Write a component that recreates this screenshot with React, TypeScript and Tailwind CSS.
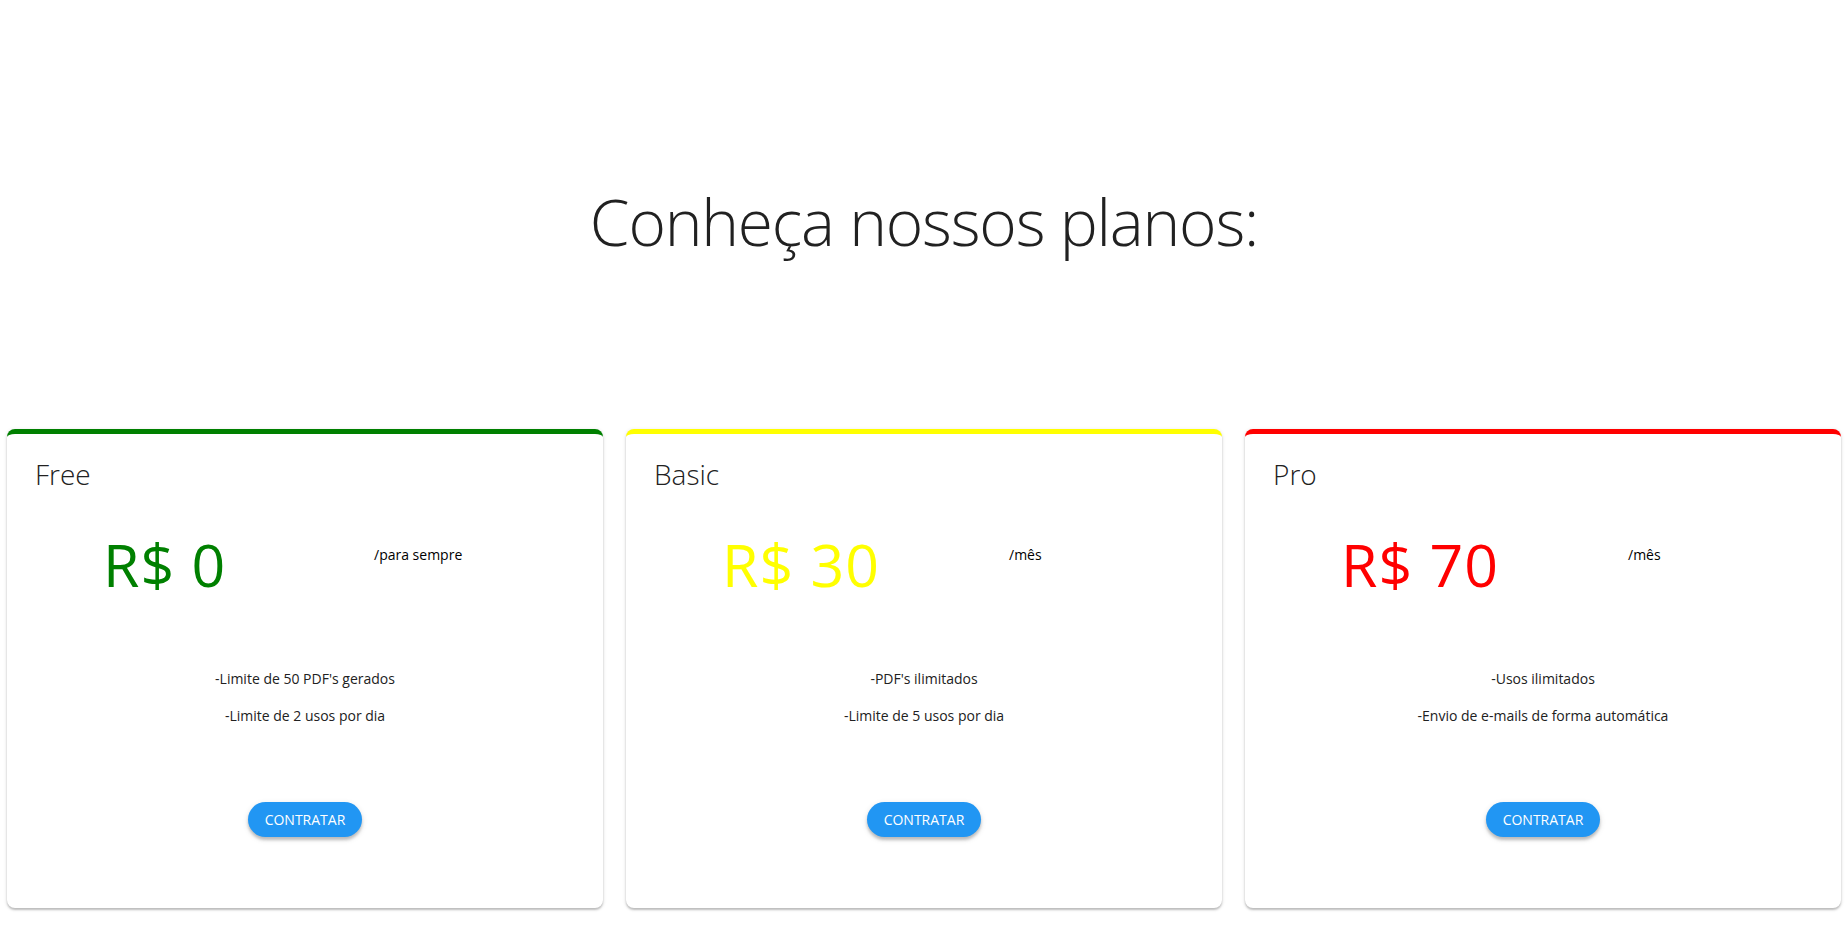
import React from 'react';

interface Plan {
  name: string;
  price: string;
  period: string;
  border: string;
  color: string;
  priceBox: string;
  features: string[];
}

const plans: Plan[] = [
  {
    name: 'Free',
    price: 'R$ 0',
    period: '/para sempre',
    border: 'border-[#008000]',
    color: 'text-[#008000]',
    priceBox: 'w-[271px]',
    features: ["-Limite de 50 PDF's gerados", '-Limite de 2 usos por dia'],
  },
  {
    name: 'Basic',
    price: 'R$ 30',
    period: '/mês',
    border: 'border-[#ffff00]',
    color: 'text-[#ffff00]',
    priceBox: 'w-[287px]',
    features: ["-PDF's ilimitados", '-Limite de 5 usos por dia'],
  },
  {
    name: 'Pro',
    price: 'R$ 70',
    period: '/mês',
    border: 'border-[#ff0000]',
    color: 'text-[#ff0000]',
    priceBox: 'w-[287px]',
    features: ['-Usos ilimitados', '-Envio de e-mails de forma automática'],
  },
];

function PlanCard({ plan }: { plan: Plan }) {
  return (
    <div
      className={`bg-white rounded-lg border-t-[5px] ${plan.border} shadow-[0_2px_2px_rgba(0,0,0,0.2),0_1px_4px_rgba(0,0,0,0.12)] h-[479px] px-[28px] pt-[22px]`}
    >
      <h3 className="text-[28px] leading-[36px] font-light text-[#212121]">{plan.name}</h3>

      {/* preço */}
      <div className="flex items-start mt-[43px] ml-[68px]">
        <div className={`${plan.priceBox} shrink-0`}>
          <span className={`text-[59px] leading-[59px] tracking-[1px] ${plan.color}`}>{plan.price}</span>
        </div>
        <span className="text-[14px] leading-[20px] text-black mt-[10px]">{plan.period}</span>
      </div>

      <div className="mt-[75px] flex flex-col items-center gap-[17px] text-[14px] leading-[20px] text-[#212121]">
        {plan.features.map((f) => (
          <p key={f}>{f}</p>
        ))}
      </div>

      <div className="flex justify-center mt-[76px]">
        <button className="h-[35px] w-[114px] rounded-full bg-[#2196f3] text-white text-[14px] uppercase shadow-[0_3px_3px_rgba(0,0,0,0.2),0_2px_6px_rgba(0,0,0,0.12)]">
          Contratar
        </button>
      </div>
    </div>
  );
}

export default function App() {
  return (
    <div className="min-h-screen bg-white font-['Open_Sans',sans-serif]">
      <h1 className="pt-[184px] text-center text-[64px] leading-[76px] font-light tracking-[-1.2px] text-[#212121]">
        Conheça nossos planos:
      </h1>
      <div className="grid grid-cols-3 gap-[23px] px-[7px] mt-[169px]">
        {plans.map((p) => (
          <PlanCard key={p.name} plan={p} />
        ))}
      </div>
    </div>
  );
}
